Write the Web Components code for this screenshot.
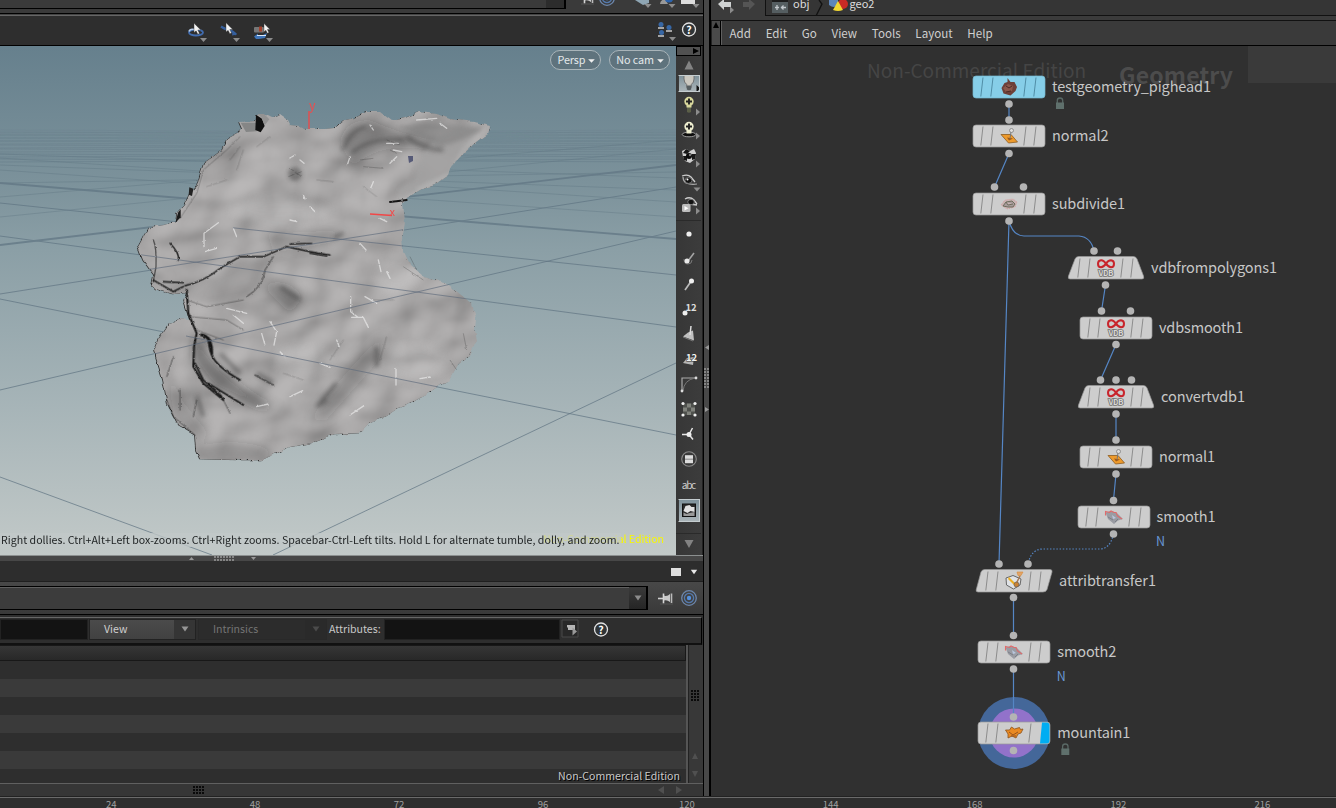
<!DOCTYPE html>
<html lang="en"><head><meta charset="utf-8"><title>Houdini</title>
<style>
html,body{margin:0;height:100%;overflow:hidden;background:#2f2f2f}
body{font-family:"Noto Sans CJK SC","Noto Sans",sans-serif;font-size:10.6px;line-height:14px;color:#c8c8c8}
</style></head><body><hou-app></hou-app>
<script>
const define=(name,html)=>customElements.define(name,class extends HTMLElement{
  constructor(){super();this.attachShadow({mode:'open'})}
  connectedCallback(){this.shadowRoot.innerHTML='<style>*{box-sizing:border-box}svg{display:block;overflow:visible}</style>'+(typeof html==='function'?html(this):html)}
});
const tri=(x,y,c='#8c8c8c',w=3.5,h=4)=>`<path d="M${x-w} ${y-h/2}h${w*2}l${-w} ${h}z" fill="${c}"/>`;
const arrowR=(x,y,c='#8c8c8c')=>`<path d="M${x-2} ${y-3.5}v7l4-3.5z" fill="${c}"/>`;

const ICONS={
up:`<path d="M-4.500 4.500h9L0-4.500z" fill="#838383"/>`,
down:`<path d="M-4.500-4h9L0 4z" fill="#838383"/>`,
bulb:`<path d="M-5-8h10v4q0 3.500-2.700 5.500v3h-4.600v-3q-2.700-2-2.700-5.500z" fill="#cbc8c0" stroke="#6b6b6b" stroke-width=".9"/><path d="M-2.200 2.500h4.400v4q-2.200 1.500-4.400 0z" fill="#565d60"/><path d="M7.500 2v7l4-3.500z" fill="#111"/>`,
bulbadd:`<path d="M-2 1h4v6q-2 1.500-4 0z" fill="#5b5f48"/><path d="M0-8.200a4.700 4.700 0 0 1 4.700 4.700q0 2.500-2.200 4v2h-5v-2q-2.200-1.500-2.200-4A4.700 4.700 0 0 1 0-8.200z" fill="#d8d79c"/><path d="M-3-3.500h6M0-6.500v6" stroke="#222" stroke-width="1.900"/>${arrowR(9,7)}`,
bulbfloor:`<ellipse cy="4.500" rx="6.800" ry="2.300" fill="#0c0c0c" stroke="#bbb" stroke-width=".8"/><path d="M0-8.200a4.700 4.700 0 0 1 4.700 4.700q0 2.500-2.200 4v3h-5v-3q-2.200-1.500-2.200-4A4.700 4.700 0 0 1 0-8.200z" fill="#eeeed0"/><path d="M-3-3.500h6M0-6.500v6" stroke="#222" stroke-width="1.900"/>${arrowR(9,6)}`,
shade:`<path d="M-7-5l4-2 4 2 4-2 2 4-1 6-5 4-5-2-2-4z" fill="#cfcfcf"/><path d="M-3-7l4 2-3 3-4-1zM3-2l4 0-1 5-3 1zM-6 0l4 0 0 5-3-1z" fill="#161616"/><circle r="3" fill="#0b0b0b"/><circle cx="1" cy="-1" r="1.200" fill="#777"/>${arrowR(9,8)}`,
ghost:`<path d="M-7-5q6-2 9 1l4 5" fill="none" stroke="#ccc" stroke-width="1.300"/><path d="M-6-4q0 4 3 6 5 2 11 1" fill="none" stroke="#aaa" stroke-width="1.200"/><ellipse cx="-.5" cy="-.5" rx="3.500" ry="2.900" fill="#111" stroke="#888" stroke-width=".8"/><circle cx="-1.500" cy="-1.500" r="1" fill="#fff"/>${tri(8,8.500)}`,
ghost2:`<path d="M-4-6q5-3 9 1l3 4M0-1l8 1" fill="none" stroke="#ccc" stroke-width="1.300"/><ellipse cx="2" cy="-3" rx="3.300" ry="2.700" fill="#111" stroke="#888" stroke-width=".8"/><rect x="-7" y="-1" width="8.500" height="8" rx="1.500" fill="#bcbcbc"/><path d="M-4.500 1v4.500l4-2.200z" fill="#fff"/>${arrowR(9,6)}`,
dot:`<circle r="2.600" fill="#eee"/>`,
pointn:`<path d="M5-6L-1 2" stroke="#a5a5a5" stroke-width="1.600"/><path d="M-5 0q0 5 4 5 4 0 4-4" fill="none" stroke="#777"/><circle cx="-2" cy="2" r="2.500" fill="#e9e9e9"/>`,
trail:`<path d="M3-4L-4 6" stroke="#bbb" stroke-width="1.700"/><circle cx="2.500" cy="-3" r="2.500" fill="#eee"/>`,
num:`<circle cx="-4" cy="4" r="2.500" fill="#eee"/><text x="-3.500" y="1.500" font-size="9.500" font-weight="700" fill="#ddd" textLength="11">12</text>`,
primn:`<path d="M-6 2.500l5-4 5-2 1 10z" fill="#c0c0c0"/><path d="M2-8L1 1" stroke="#ddd" stroke-width="1.500"/><path d="M-6 3l10 4" stroke="#777"/>`,
primnum:`<path d="M-6 4l4-5 7-1-1 8z" fill="#b5b5b5"/><text x="-3" y="1.500" font-size="9.500" font-weight="700" fill="#f2f2f2" stroke="#333" stroke-width="1" paint-order="stroke" textLength="11">12</text>`,
curve:`<path d="M-7 7V-6H7" fill="none" stroke="#aaa" stroke-width="1.200"/><path d="M-6 7Q-5-4 6-6" fill="none" stroke="#777"/><circle cx="-7" cy="7" r="1.400" fill="#ddd"/><circle cx="7" cy="-6" r="1.400" fill="#ddd"/>`,
check:`<path d="M-6-5.500H6V6H-6z" fill="#4f514d"/><path d="M-2-5.500h4v4h-4zM-6-1.500h4v4h-4zM2-1.500h4v4H2zM-2 2.500h4V6h-4z" fill="#80827c"/><g fill="#f2f2f2"><circle cx="-6" cy="-5.500" r="1.600"/><circle cx="6" cy="-5.500" r="1.600"/><circle cx="-6" cy="6" r="1.600"/><circle cx="6" cy="6" r="1.600"/></g>`,
axes:`<path d="M-7 .5H0M3.500-6L0 .5M0 .5l4 5" fill="none" stroke="#e6e6e6" stroke-width="1.500"/><circle cy=".5" r="2.500" fill="#eee"/>`,
list:`<circle r="7.300" fill="none" stroke="#8a8a8a" stroke-width="1.100"/><path d="M-4-3.800h8v8h-8z" fill="#ddd"/><path d="M-4 .2h8" stroke="#888"/>`,
abc:`<text y="4.500" text-anchor="middle" font-size="10.200" fill="#ccc" textLength="14.500">abc</text>`,
bg:`<rect x="-6.500" y="-6" width="13" height="12.500" fill="#2b2b2b" stroke="#111"/><path d="M-5.500 1l2-5 4-1 2 2 3 0v5l-4-1-3 2z" fill="#e0e0e0"/><path d="M-5.500 2.500l3 1.500 3-1 5-1v4H-5.500z" fill="#999"/>`
};
define('tool-button',e=>{
  const on=e.hasAttribute('on');
  return `<style>:host{display:flex;justify-content:center;align-items:center;flex:none;height:${e.getAttribute('h')||25}px}
  div{width:22px;height:${on?(e.getAttribute('icon')==='bg'?'23px':'17px'):'100%'};display:flex;align-items:center;justify-content:center;${on?'background:linear-gradient(#7f929b,#aab4b8);border:1px solid #c5cdd0;border-left-color:#3b3b3b;overflow:hidden':''}}
  svg{flex:none}</style><div><svg width="24" height="24" viewBox="-12 -12 24 24">${ICONS[e.getAttribute('icon')]}</svg></div>`});
define('tool-rail',`<style>:host{display:flex;flex-direction:column;width:27px;background:linear-gradient(90deg,#373737,#3c3c3c);border-right:1px solid #222;padding-right:1px}
.h{height:10px;border:1px solid #000;background:#515151;flex:none}.s{height:4px;border-bottom:1px solid #2a2a2a;flex:none}</style>
<div class="h"><svg width="23" height="8"><path d="M16 1v6l6-3z" fill="#000"/></svg></div>
<tool-button icon="up" h="18"></tool-button><tool-button icon="bulb" h="18" on></tool-button><tool-button icon="bulbadd"></tool-button><tool-button icon="bulbfloor"></tool-button><tool-button icon="shade" h="27"></tool-button><tool-button icon="ghost" h="24"></tool-button><tool-button icon="ghost2" h="24"></tool-button><div class="s"></div>
${['dot','pointn','trail','num','primn','primnum','curve','check','axes','list','abc'].map(i=>`<tool-button icon="${i}"></tool-button>`).join('')}<tool-button icon="bg" on h="28"></tool-button><div class="s" style="height:10px"></div><tool-button icon="down" h="20"></tool-button>`);

const HEAD='M138 247L145 234 150 227 163 225 176 222 177 214 185 205 190 194 197 186 201 172 204 163 214 156 222 150 227 139 238 133 242 129 239 122 256 121 256 115 264 114 272 118 280 114 287 119 290 125 300 126 308 129 325 129 335 128 345 120 355 118 366 112 380 112 392 121 405 118 419 112 437 114 450 119 475 122 490 126 488 133 475 143 460 157 450 168 448 175 437 183 420 190 407 198 402 203 404 222 402 235 403 250 410 264 424 277 445 283 459 293 472 304 476 318 475 330 477 340 470 355 458 365 448 382 440 385 426 395 407 405 398 408 386 416 370 422 360 433 335 434 312 443 290 447 262 460 240 460 200 459 196 450 195 435 178 425 168 405 163 380 160 370 154 350 158 340 168 325 180 319 190 320 188 313 184 300 187 293 172 294 156 289 152 285 154 275 143 260Z';
const over=`M0 203L676 275M0 236L676 327M0 299L676 435M0 390L676 231M0 294L676 187`;
const horizon=[131,133,136,139,142,146,150,155,160].map((y,i)=>`<path d="M0 ${y+2}L676 ${y-1}M0 ${y-1}L676 ${y+2}" opacity="${.12+i*.03}"/>`).join('');
define('scene-view',`<style>:host{display:block;position:relative;flex:1;height:509px;overflow:hidden;background:linear-gradient(#66808d,#7c929b 27%,#8b9fa6 40%,#a2b1b5 66%,#c2c9c8)}
.cams{position:absolute;top:4px;right:6px;display:flex;gap:8px}.cams span{height:20px;border:1px solid #a9b4b9;border-radius:10px;background:#5f737d;color:#e4e8ea;padding:0 5px 0 6px;display:flex;align-items:center;gap:3px;line-height:14px;padding-bottom:3px;font-size:10.8px;letter-spacing:-.1px}
.cams svg{margin-top:4px}</style>
<svg width="676" height="509" viewBox="0 46 676 509">
<defs><clipPath id="c"><path d="${HEAD}"/></clipPath>
<filter id="rock" x="130" y="105" width="370" height="365" filterUnits="userSpaceOnUse" color-interpolation-filters="sRGB">
<feTurbulence type="fractalNoise" baseFrequency=".022 .025" numOctaves="2" seed="21"/>
<feColorMatrix values="0 0 0 0 0 0 0 0 0 0 0 0 0 0 0 1 0 0 0 0"/><feGaussianBlur stdDeviation="1.500" result="h"/>
<feDiffuseLighting in="h" surfaceScale="5.500" diffuseConstant="1" lighting-color="#bab8b8" result="d"><feDistantLight azimuth="235" elevation="66"/></feDiffuseLighting>
<feGaussianBlur in="d" stdDeviation="1" result="l"/>
<feTurbulence type="fractalNoise" baseFrequency=".12" numOctaves="2" seed="3" result="t"/>
<feDisplacementMap in="SourceGraphic" in2="t" scale="4" xChannelSelector="R" yChannelSelector="G" result="o"/>
<feComposite in="l" in2="o" operator="in"/></filter>
<filter id="b6" x="-50%" y="-50%" width="200%" height="200%"><feGaussianBlur stdDeviation="14"/></filter><filter id="b4" x="-50%" y="-50%" width="200%" height="200%"><feGaussianBlur stdDeviation="6"/></filter>
<filter id="jag" x="-20%" y="-20%" width="140%" height="140%"><feTurbulence type="fractalNoise" baseFrequency=".12" numOctaves="2" seed="3"/><feDisplacementMap in="SourceGraphic" scale="4" xChannelSelector="R" yChannelSelector="G"/></filter>
<filter id="wob" x="-20%" y="-20%" width="140%" height="140%"><feTurbulence type="fractalNoise" baseFrequency=".1" numOctaves="2" seed="5"/><feDisplacementMap in="SourceGraphic" scale="7" xChannelSelector="R" yChannelSelector="G"/><feGaussianBlur stdDeviation=".45"/></filter></defs>
<g stroke="#5f7482" fill="none" stroke-width="1">${horizon}
<g opacity=".7"><path d="M0 217L676 149M0 170L676 217M0 197L676 140M0 158L676 202M0 183L676 172M0 165L676 190M0 154L676 178" opacity=".55"/><path d="${over}M0 477L212 555M273 555L676 363"/><path d="M0 183L676 239M0 245L676 165" stroke-width="1.900"/></g></g>
<path d="${HEAD}" fill="#333" transform="translate(-.8 .3)" filter="url(#jag)"/>
<path d="${HEAD}" fill="#aaa" filter="url(#rock)"/>
<g clip-path="url(#c)"><g transform="translate(130 100) scale(.33333)">
<g filter="url(#b6)" fill="#222"><path d="M190 690Q260 830 430 920L560 880 400 930 250 860 190 780Z" opacity=".4"/><path d="M630 130Q640 60 720 60Q830 110 920 120L940 160Q760 110 670 200Z" opacity=".3"/><path d="M400 560Q460 520 520 590L480 640Z" opacity=".3"/><path d="M540 960Q610 850 760 700L740 790 590 960Z" opacity=".22"/><ellipse cx="300" cy="1060" rx="120" ry="35" opacity=".2"/><path d="M100 760L130 960 200 1050 240 1000 160 900Z" opacity=".15"/><path d="M180 600Q280 480 420 470L380 580 250 610Z" opacity=".1"/><path d="M410 400L640 390 600 430 430 460Z" opacity=".18"/></g>
<g filter="url(#b6)" fill="#eee" opacity=".15"><ellipse cx="450" cy="330" rx="150" ry="40"/><ellipse cx="860" cy="790" rx="90" ry="60"/><ellipse cx="800" cy="520" rx="60" ry="60"/><ellipse cx="520" cy="780" rx="90" ry="40"/></g>
<path d="M850 240Q880 120 960 90L1060 85 1000 150 960 225 880 265 820 290Q780 280 850 240Z" fill="#a3a2a2" opacity=".85" filter="url(#b4)"/>
<path d="M860 70Q960 70 1060 85Q1000 125 930 140Q850 100 800 80Z" fill="#7b7b7b" opacity=".55" filter="url(#b4)"/>
<path d="M1070 85L1000 150 965 222 860 270" fill="none" stroke="#c6c6c6" stroke-width="7" opacity=".6" filter="url(#b4)"/>
<g filter="url(#b4)" fill="none" stroke="#3c3c3c" opacity=".5"><path d="M640 150Q660 90 710 80M830 110Q880 150 940 150M665 160Q720 110 820 120" stroke-width="10"/><ellipse cx="495" cy="222" rx="12" ry="12" stroke-width="16"/><path d="M450 560l60 40M590 900l-30 20M620 850l-50 60M270 760l60 60M380 820l50 30M200 890l20 60M740 740l0 60M640 400l-30 15" stroke-width="12"/></g>
</g></g>
<g transform="translate(130 100) scale(.33333)">
<g fill="none" stroke="#181818" filter="url(#wob)" stroke-linecap="round"><path d="M165 557Q220 545 270 505L330 470 400 470 470 440 540 455 600 465" stroke-width="4"/><path d="M350 590Q400 560 405 510L430 470" stroke-width="3" opacity=".7"/><path d="M480 432L545 430M540 460L590 468" stroke-width="4"/><path d="M170 570L175 640 200 700 192 740 190 800 220 850 280 900" stroke-width="6"/><path d="M195 790L220 840 275 890M235 850L340 915" stroke-width="5"/><path d="M215 705Q245 710 245 760M235 715l8 40" stroke-width="9"/><path d="M245 765Q260 800 330 840" stroke-width="5"/><path d="M375 825L430 855" stroke-width="4" opacity=".6"/><path d="M170 600L230 620 340 600M180 650L290 660 340 690M200 690L280 720" stroke-width="2.500" opacity=".4"/><path d="M130 770L110 830M150 870L150 930M110 900L130 950 195 1005M200 900L190 950M265 870L300 940" stroke-width="3" opacity=".5"/><path d="M120 430Q150 460 145 480M70 540L130 575 160 560M100 545L160 548" stroke-width="5" opacity=".85"/><path d="M70 420Q80 440 78 500L70 545" stroke-width="4" opacity=".6"/><path d="M150 355L200 280 220 210 290 150 330 110" stroke-width="2" opacity=".4"/><path d="M780 306L830 300" stroke-width="6"/><path d="M230 260l60-20M300 180l30-40M340 150l-20 60M380 140l40-30M560 240l50 5M700 260l40 30M730 600l60 0M750 780l20-70M600 780l40-60M460 820l60 20" stroke-width="2" opacity=".25"/></g>
<path d="M332 68l48 0 0 26-32 2z" fill="#858686"/><path d="M378 44L396 56 404 78 392 97 376 90Z" fill="#101010"/><path d="M382 42L402 42 418 58 404 76 394 52Z" fill="#929292"/><path d="M178 262l12 4-4 22-10-4z" fill="#222"/><path d="M136 368l8-30 8-10 0 24z" fill="#1b1b1b"/>
<g fill="none" stroke="#efefef" stroke-width="4" opacity=".65" filter="url(#wob)" stroke-linecap="round"><path d="M222 440V400L265 368M225 455l35-10M310 385l10 25M662 590v45l20 15M705 590l35 20M665 652l35 0 15 30M745 480l8 35M770 515l10 20M690 430l18 20M798 805v50M870 836l30-5M620 720l8 20M570 790l30 12M660 945l42-28M480 890l38-18M380 920l35-8M450 755l15 15M420 665l20 30-8 40M395 700l10 35M290 625l60 15M310 645l30 25M520 285l5 12M540 320l15 15M495 165l-20 12M510 180l12 10M480 360l20 5M770 130l35 0M790 150l25 5M800 170l-20 20M730 245l-8 20M750 355l20 10M860 60l60-5M930 70l20 15M660 170l-8 25M720 75l10 15"/></g>
<g fill="none" stroke="#222" stroke-width="2" opacity=".35" filter="url(#wob)"><path d="M770 120l40 15M780 150l20 10M690 180l40-5M700 200l60 5M480 205l35 25M475 230l40-15M840 470l20 40M820 500l60 40M1000 700l10 50M960 780l20 30"/></g></g>
<g clip-path="url(#c)" fill="none" stroke="#5e6a7b" stroke-width="1" opacity=".65"><path d="M233 227.800L676 275M120 252L676 327M186 336L676 435M120 362L676 231M120 274L676 187"/></g>
<path d="M408 156h5v5l-4 2z" fill="#565a77"/><g stroke="#f14747" stroke-width="1.300"><path d="M309 111V129M370 214L392 215.500"/></g><g fill="#f04b4b"><text x="309" y="110" font-size="12.500">y</text><text x="389.500" y="216" font-size="11">x</text></g>
<text x="543" y="543" font-size="10.600" fill="#f8f800" textLength="121">Non-Commercial Edition</text><path d="M0 533H621V547H0z" fill="#c1c8c8" opacity=".75"/>
<text x="1" y="544" font-size="10.600" fill="#202425" textLength="618.500">Right dollies. Ctrl+Alt+Left box-zooms. Ctrl+Right zooms. Spacebar-Ctrl-Left tilts. Hold L for alternate tumble, dolly, and zoom.</text>
</svg>
<div class="cams"><span>Persp<svg width="7" height="4">${tri(3.5,2,'#f0f0f0',3.3,3.5)}</svg></span><span>No cam<svg width="7" height="4">${tri(3.5,2,'#f0f0f0',3.3,3.5)}</svg></span></div>`);

const help=`<circle r="6.500" fill="#303538" stroke="#e3e3e3" stroke-width="1.300"/><text y="4" text-anchor="middle" font-size="10.500" font-weight="700" fill="#fff">?</text>`;
const target=`<g fill="none" stroke="#5479ad" stroke-width="1.300"><circle r="7.300" stroke="#6c87ad"/><circle r="4.600"/></g><circle r="2.200" fill="#5490dd"/>`;
const pin=`<path d="M-8 .5h7" stroke="#d0d0d0" stroke-width="1.600"/><path d="M-2.500-4.500v10" stroke="#d5d5d5" stroke-width="1.600"/><path d="M-2-2.500q3 1.500 6-1.500v8q-3-2.500-6-1.500z" fill="#c9c9c9"/><path d="M5.500-4.500v9.500" stroke="#bbb" stroke-width="1.600"/><path d="M-6 6H7" stroke="#555"/>`;
const cursor='<path d="M0-8v11l2.500-2 2 4 2-1-2-4 3.500 0z" fill="#f4f4f4" stroke="#333" stroke-width=".5"/>';
define('view-toolbar',`<style>:host{display:flex;flex-direction:column;height:46px;background:#3a3a3a;flex:none}
.a{height:14px;border-bottom:1px solid #000;display:flex}.combo{width:566px;height:9px;border:solid #000;border-width:0 2px 1px 0;display:flex;justify-content:flex-end}.combo i{width:18px;background:#2c2c2c}
.b{height:32px;border-bottom:1px solid #000;background:#2e2e2e;border-top:1px solid #444;box-shadow:inset 0 1px #666;display:flex;align-items:center;padding-left:186px}.sp{flex:1}</style>
<div class="a"><div class="combo"><i></i></div><svg width="137" height="13"><g transform="translate(21 -2)">${pin}</g><g transform="translate(41 -2)">${target}</g><path d="M69 0l8 5 6-2V0z" fill="#8fa6b4"/>${tri(82,6)}<path d="M94 4q0-4 5-5l3 5z" fill="#999"/><circle cx="103" cy="-2" r="4.500" fill="#2c63ac"/>${tri(106,6)}<path d="M115 0h14v4h-14z" fill="#ddd"/>${tri(130,6)}</svg></div>
<div class="b"><svg width="90" height="30"><g transform="translate(10 15.500)"><ellipse cx="0" cy="2" rx="7" ry="3" fill="none" stroke="#416caf" stroke-width="1.800"/><path d="M-7 1q1-3 5-2" stroke="#b8cdea" fill="none" stroke-width="1.500"/><g transform="translate(-2 -.5) scale(.85)">${cursor}</g>${tri(7.5,9.5)}</g>
<g transform="translate(43 15.500)"><path d="M-8-4q5 3 7 3t8 5" fill="none" stroke="#355f9e" stroke-width="2.500"/><path d="M4 0l4 4-5 1z" fill="#355f9e"/><g transform="translate(-3 -1) scale(.85)">${cursor}</g>${tri(7.5,9.5)}</g>
<g transform="translate(76 15.500)"><rect x="-8" y="-3.500" width="10" height="5.500" rx="1" fill="#777"/><path d="M-3-4h3v5h-3z" fill="#a33f2b"/><path d="M-8 6l4-3v1.500h5l4-2-2 5-6 1h-3z" fill="#3e74b8"/><path d="M-5 5h9" stroke="#dbe7f7"/><g transform="translate(2 -1) scale(.75)">${cursor}</g>${tri(7.5,9.5)}</g></svg><div class="sp"></div>
<svg width="47" height="30"><g fill="#3767a5"><circle cx="5" cy="9.500" r="2.500"/><circle cx="13" cy="12.500" r="2.500"/><circle cx="5.500" cy="17.500" r="2.500"/></g><path d="M2 13h6M10 16h6M2 21h6" stroke="#ccc" stroke-width="1.500"/>${tri(16.5,24)}<g transform="translate(33 14.500)">${help}</g></svg></div>`);

const dots=(w,h,c)=>`<svg width="${w}" height="${h}"><defs><pattern id="p" width="3" height="3" patternUnits="userSpaceOnUse"><path d="M0 0h2v2H0z" fill="${c}"/></pattern></defs><path d="M0 0h${w}v${h}H0z" fill="url(#p)"/></svg>`;
define('pane-splitter',`<style>:host{display:flex;height:6px;border-top:1px solid #8c9090;background:#474747;flex:none;padding-left:189px;gap:20px;align-items:center}</style><svg width="5" height="3"><path d="M0 3h5L2.500 0z" fill="#999"/></svg>${dots(20,5,'#858585')}<svg width="5" height="3" style="margin-left:-3px"><path d="M0 0h5L2.500 3z" fill="#999"/></svg>`);
define('side-splitter',`<style>:host{display:flex;flex-direction:column;align-items:center;width:8px;background:#484848;border:solid #000;border-width:0 2px 0 1px;padding-top:345px;gap:20px}</style><svg width="4" height="5"><path d="M4 0v5L0 2.500z" fill="#999"/></svg><div style="margin-top:-2px">${dots(5,20,'#858585')}</div><svg width="4" height="5" style="margin-top:-1px"><path d="M0 0v5l4-2.500z" fill="#999"/></svg>`);

define('drop-box',e=>`<style>:host{display:flex;height:21px;width:${e.getAttribute('w')}px;background:linear-gradient(#4b4b4b,#414141);border:1px solid #222;color:#cfcfcf;flex:none}
:host([off]){background:#2c2c2c;color:#747474;border-color:#292929}.t{flex:1;padding:2px 0 0 14px}.d{width:21px;background:#353535;display:flex;align-items:center;justify-content:center}:host([off]) .d{background:#2a2a2a}</style><div class="t"><slot></slot></div><div class="d"><svg width="8" height="6">${tri(4,3,e.hasAttribute('off')?'#4b4b4b':'#969696',3.5,5)}</svg></div>`);
define('spreadsheet-pane',`<style>:host{display:flex;flex-direction:column;background:#2e2e2e;flex:1}
.tabs{height:21px;background:#2d2d2d;border-bottom:1px solid #1f1f1f;display:flex;justify-content:flex-end;align-items:center;padding:2px 5px 0 0}
.path{height:33px;background:linear-gradient(#484848,#393939);border-bottom:1px solid #000;display:flex;align-items:center}.combo{width:648px;height:24px;border:solid #000;border-width:1px 2px 1px 0;background:#3c3c3c;box-shadow:inset 0 1px #606060;display:flex;justify-content:flex-end}.combo div{width:17px;background:linear-gradient(#3a3a3a,#252525);display:flex;align-items:center;justify-content:center}
.filter{height:28px;margin-top:2px;border-top:1px solid #666;border-bottom:2px solid #111;display:flex;align-items:center;padding-bottom:3px;border-right:1px solid #000;margin-right:1px}
.in{background:#131313;border:1px solid #222;height:21px}.grid{display:flex;height:138px}.tbl{width:688px;border-right:2px solid #555;position:relative;display:flex;flex-direction:column}
.hd{height:16px;flex:none;border:1px solid #181818;border-left:0;background:linear-gradient(#363636,#282828)}.r{height:18px;flex:none;background:#2e2e2e}.r:nth-child(odd){background:#3a3a3a}.r:last-of-type{height:14px}
.nc{position:absolute;right:6px;bottom:0;text-shadow:1px 1px #000;color:#c9c9c9;white-space:nowrap}
.vs{flex:1;background:#383838;display:flex;flex-direction:column;align-items:center;padding:45px 2px 0 0;border-left:1px solid #222}.hs{height:16px;background:#363636;border-top:1px solid #606060;display:flex;align-items:center;padding:0 0 3px 193px}</style>
<div class="tabs"><svg width="28" height="10"><path d="M1 1h10v8H1z" fill="#dedede"/>${tri(24,5,'#e8e8e8',3.2,4.5)}</svg></div>
<div class="path"><div class="combo"><div><svg width="8" height="6">${tri(4,3,'#8c8c8c',3.5,5)}</svg></div></div><svg width="52" height="24"><g transform="translate(18 12)">${pin}</g><g transform="translate(41 12)">${target}</g></svg></div>
<div class="filter"><div class="in" style="width:88px"></div><drop-box w="107" style="margin-left:1px">View</drop-box><drop-box w="129" off style="margin-left:2px">Intrinsics</drop-box><span style="margin-left:2px;width:55px;margin-top:-1px">Attributes:</span><div class="in" style="width:176px"></div><svg width="60" height="21"><path d="M2 1h16v17H2z" fill="#282828" stroke="#484848"/><path d="M7 6h8v5H8V8.500H7z" fill="#b5b5b5"/><path d="M12.500 8.500v8l4.500-4z" fill="#999"/><g transform="translate(41 10.500)">${help}</g></svg></div>
<div class="grid"><div class="tbl"><div class="hd"></div>${'<div class="r"></div>'.repeat(7)}<span class="nc">Non-Commercial Edition</span></div><div class="vs">${dots(8,11,'#0a0a0a')}<svg width="10" height="30" style="margin-top:46px"><path d="M2 12h6L5 6zM2 24h6l-3 6z" fill="#505050"/></svg></div></div>
<div class="hs">${dots(11,8,'#0a0a0a')}<svg width="30" height="8" style="margin-left:452px"><path d="M8 0v8L2 4zM20 0v8l6-4z" fill="#505050"/></svg></div>`);

const vdb=`<path d="M0-4.300Q-2.500-8-5-7.700-8-7.300-8-4.300-8-.8-5-.8-2.500-.8 0-4.300 2-7.700 5-7.700 8-7.300 8-4.300 8-.8 5-.8 2.500-.8 0-4.300" fill="none" stroke="#c8242b" stroke-width="2"/><text y="8" text-anchor="middle" font-size="8" font-weight="700" fill="#d8d8d8" stroke="#73736f" stroke-width="1.600" paint-order="stroke" textLength="15">VDB</text>`;
const NI={pig:`<path d="M-7.500 1l3-5 3-1 0-4 3 4 4 0 2.500 5-1.500 4-5 4.500-7-2z" fill="#6d4039"/><path d="M-6 1l5-4 5 2-1 5-6 1z" fill="#8b584b"/><path d="M-3-1l3 2 3-2M-3 5l5-1" stroke="#4c2b27" fill="none"/>`,
normal:`<path d="M-8-1.500l10 0 6.500 7.500-9 1z" fill="#ed9a2c" stroke="#8d5c21" stroke-width=".8"/><path d="M-2 1.500l6 1-4 2z" fill="#9c5919"/><path d="M1 2.500L2-4" stroke="#777"/><circle cx="2.500" cy="-5.500" r="2" fill="#ddd" stroke="#777" stroke-width=".7"/>`,
sub:`<path d="M-8 1l4-5 8-1 4 3-2 5-8 2z" fill="#c9b5b5" stroke="#d79b9b" stroke-width=".8" stroke-dasharray="1 1"/><path d="M-6 2l3-4 6-1 3 3-2 3-5 0zM-3-2l2 3 5-1" fill="#a89c9c" stroke="#665" stroke-width=".9"/>`,
vdb,smooth:`<path d="M-8.500-4.500l5-1.500 6 1.500 6.500 6.500-5 1.500-4 3.500-6-5z" fill="#9a9ca3"/><path d="M-8.500-1.500l0-4 4 1 1.500-1.500 3 1.500 2 0 1.500 3.500 4.500 3" fill="none" stroke="#e06a6a" stroke-width="1.100"/><path d="M-2-2l4 3-3 1z" fill="#b9c7de"/><path d="M-6 0l5 3M1 5l3-3" stroke="#7c8088"/>`,
attrib:`<path d="M-8-3l7-2.500 8 3.500-1 6-6.500 4-7-4z" fill="#dfe2e6" stroke="#666" stroke-width="1"/><path d="M-5-4l6 6v3L-6-2z" fill="#edb022"/><path d="M2 3l4-8" stroke="#a57a55" stroke-width="1.500"/><circle cx="2.500" cy="3.500" r="2.500" fill="#c98235" stroke="#555" stroke-width=".6"/><path d="M3-9h6l-2 3.500H4z" fill="#e0a368" stroke="#d98a34" stroke-width=".6"/>`,
mountain:`<path d="M-8.500-3l4 0 2-3 3 2 5-1.500 1 2 2.500-.5-2 4-3 1-2 4-4-2-4 2 0-4z" fill="#e98a23" stroke="#8c531e" stroke-width=".8"/><path d="M-5-1l4 3 5-3M-3 3l5 0" stroke="#98541c" fill="none"/>`};
const SH={rect:'M-33-11h66a3 3 0 0 1 3 3v16a3 3 0 0 1-3 3h-66a3 3 0 0 1-3-3v-16a3 3 0 0 1 3-3z',trap:'M-27.500-11.500H27.500Q30-11.500 31-9L37.500 8Q38.500 11 36 11h-72Q-38.500 11-37.500 8L-31-9Q-30-11.500-27.500-11.500z',para:'M-29.500-11.500H36Q38.500-11.500 38-9L33 8.500Q32 11 29 11H-36Q-38.500 11-37.700 8.500L-33-9Q-32-11.500-29.500-11.500z'};
define('sop-node',e=>{const a=k=>e.getAttribute(k),cyan=e.hasAttribute('cyan'),cur=e.hasAttribute('current'),lx=+a('lx');
 const stripe=x=>`M${x+1}-9.500L${x-1.2} 9.500`;
 return `<style>:host{display:block;position:absolute;left:${a('x')-711}px;top:${a('y')-46}px;width:0;height:0}</style><svg width="1" height="1">
 ${cur?'<circle r="36" fill="#446799"/><circle r="24.500" fill="#9272ca"/>':''}
 <path d="${SH[a('shape')||'rect']}" fill="${cyan?'#86cee8':'#cdcdcd'}" stroke="${cyan?'#75b7cf':'#999'}" stroke-width=".7"/>
 ${cur?'<path d="M28-10.500h4.500q3 0 3 3v15q0 3-3 3h-6.500z" fill="#00adf2"/>':''}
 <path d="${[-27,-17,16].concat(cur?[]:[26]).map(stripe).join('')}" stroke="${cyan?'#49869e':'#858585'}" stroke-width=".9"/>${NI[a('icon')]}
 <text x="${lx}" y="5" font-size="14.500" fill="#c7c7c7" textLength="${a('tw')}">${a('label')}</text>
 ${e.hasAttribute('lock')?`<g transform="translate(${lx+8} 17)"><path d="M-2.700-1v-2.500a2.700 2.500 0 0 1 5.400 0V-1" fill="none" stroke="#5a6966" stroke-width="1.300"/><path d="M-4-1.500h8v6.500h-8z" fill="#5f706c"/></g>`:''}
 ${e.hasAttribute('n')?`<text x="${lx-.5}" y="29" font-size="12.500" fill="#6997d5">N</text>`:''}</svg>`});
const N=(icon,label,x,y,lx,tw,ex='')=>`<sop-node icon="${icon}" label="${label}" x="${x}" y="${y}" lx="${lx}" tw="${tw}" ${ex}></sop-node>`;
const ports=[[1009,104],[1009,120],[1009,153.5],[994.5,187],[1023.5,187],[1009,221],[1094,251],[1117.5,251],[1105.5,285],[1101.5,311],[1130.5,311],[1116,344.5],[1100.5,380],[1116,380],[1131.5,380],[1116,414],[1116,440],[1116,474],[1113.5,500.5],[1113.5,534],[999,564],[1028,564],[1013.5,597.5],[1013.5,635.5],[1013.5,669],[1013.5,717],[1013.5,750.5]];
define('network-canvas',`<style>:host{display:block;position:relative;flex:1;overflow:hidden;background:#303030}.box{position:absolute;right:0;top:0;width:88px;height:37px;background:#3a3a3a}.lay{position:absolute;inset:0}</style><div class="box"></div>
<svg class="lay" width="625" height="751" viewBox="711 46 625 751"><text x="867" y="78" font-size="19" fill="#454545" textLength="219">Non-Commercial Edition</text><text x="1119" y="84" font-size="23" font-weight="700" fill="#4c4c4c" textLength="114">Geometry</text></svg>
${N('pig','testgeometry_pighead1',1008.7,87,43,159,'cyan lock')}${N('normal','normal2',1008.7,136.4,43,56.5)}${N('sub','subdivide1',1008.7,204,43,73)}${N('vdb','vdbfrompolygons1',1105.5,268.3,45,126,'shape="trap"')}${N('vdb','vdbsmooth1',1115.8,328,43,84)}${N('vdb','convertvdb1',1115.8,397.3,45,84,'shape="trap"')}${N('normal','normal1',1115.8,457,43,56)}${N('smooth','smooth1',1113.6,517,42.5,59,'n')}${N('attrib','attribtransfer1',1013.5,581,45,97,'shape="para"')}${N('smooth','smooth2',1013.6,652,43.3,59,'n')}${N('mountain','mountain1',1013.6,733.4,43.3,73,'current lock')}
<svg class="lay" width="625" height="751" viewBox="711 46 625 751"><g fill="none" stroke="#5586c5" stroke-width="1.200"><path d="M1009 104v16M1009 153.500L994.500 187M1009 221L999 564M1009 221Q1013 236 1024 236H1079Q1091 237 1094 251M1105.500 285L1101.500 311M1116 344.500L1100.500 380M1116 414v26M1116 474L1113.500 500M1013.500 597v38M1013.500 669v48"/><path d="M1113.500 534Q1110 549 1100 549H1043Q1031 549 1028 564" stroke-dasharray="1.500 1.700"/></g><g fill="#b4b4b4">${ports.map(p=>`<circle cx="${p[0]}" cy="${p[1]}" r="3.800"/>`).join('')}</g></svg>`);
define('path-bar',`<style>:host{display:flex;height:21px;background:#3b3b3b;border-bottom:1px solid #111;flex:none}.nav{width:54px}.p{flex:1;height:16px;border:solid #111;border-width:0 0 1px 1px;background:#353535;display:flex;color:#ddd;font-size:11px;padding-left:5px;overflow:hidden}.p span{line-height:14px;margin-top:-4px}</style>
<svg class="nav" width="54" height="20"><path d="M7 4l6-5v3h7v5h-7v3z" fill="#cfd2d2"/>${arrowR(21,10)}<path d="M44 4l-6-5v3h-6v5h6v3z" fill="#555"/></svg>
<div class="p"><svg width="22" height="16"><path d="M1 0h16v13H1z" fill="#555e61"/><path d="M1 0h16v2H1z" fill="#1d1d1d"/><path d="M4 7.500h4M10 7.500h5M6 5v5M12.500 5.500l-2 2 2 2" stroke="#c2c8cc" stroke-width="1.300" fill="none"/></svg><span>obj</span><svg width="40" height="16"><path d="M9 0l3 4-6 12" stroke="#111" fill="none" stroke-width="1.300"/><path d="M19 0h9v5q-4 4-9 0z" fill="#5d86bb"/><circle cx="33" cy="4" r="5" fill="#c92b25"/><path d="M28 1l5 9q-5 2-10 0z" fill="#f1d832"/></svg><span>geo2</span></div>`);
define('menu-bar',`<style>:host{display:flex;height:25px;background:#3a3a3a;border-bottom:1px solid #000;flex:none;font-size:11.600px;line-height:16px;color:#cfcfcf}.g{width:10px;border-right:1px solid #000;border-left:1px solid #222;background:#4a4a4a}nav{display:flex;padding:4px 0 0 7.500px;gap:14.700px;border-left:1px solid #606060}</style><div class="g"><svg width="8" height="10"><path d="M1 7h6L4 1z" fill="#000"/></svg></div><nav><slot></slot>${['Add','Edit','Go','View','Tools','Layout','Help'].map(t=>`<span>${t}</span>`).join('')}</nav>`);
define('network-editor',`<style>:host{display:flex;flex-direction:column;flex:1}</style><path-bar></path-bar><menu-bar></menu-bar><network-canvas></network-canvas>`);
define('time-ruler',`<style>:host{display:block;height:11px;background:#2e2e2e;border-top:1px solid #6a6a6a;box-shadow:0 -1px #222;overflow:hidden;position:relative}</style><svg width="1336" height="10"><g font-size="9.500" fill="#a0a0a0" text-anchor="middle">${[24,48,72,96,120,144,168,192,216].map((n,i)=>`<text x="${111.2+i*143.9}" y="10">${n}</text>`).join('')}</g></svg>`);
define('hou-app',`<style>:host{display:flex;flex-direction:column;width:1336px;height:808px;overflow:hidden}.m{display:flex;height:797px}.l{width:703px;display:flex;flex-direction:column;background:#3a3a3a}.v{display:flex;height:509px;flex:none}</style>
<div class="m"><div class="l"><view-toolbar></view-toolbar><div class="v"><scene-view></scene-view><tool-rail></tool-rail></div><pane-splitter></pane-splitter><spreadsheet-pane></spreadsheet-pane></div><side-splitter></side-splitter><network-editor></network-editor></div><time-ruler></time-ruler>`);
</script></body></html>
